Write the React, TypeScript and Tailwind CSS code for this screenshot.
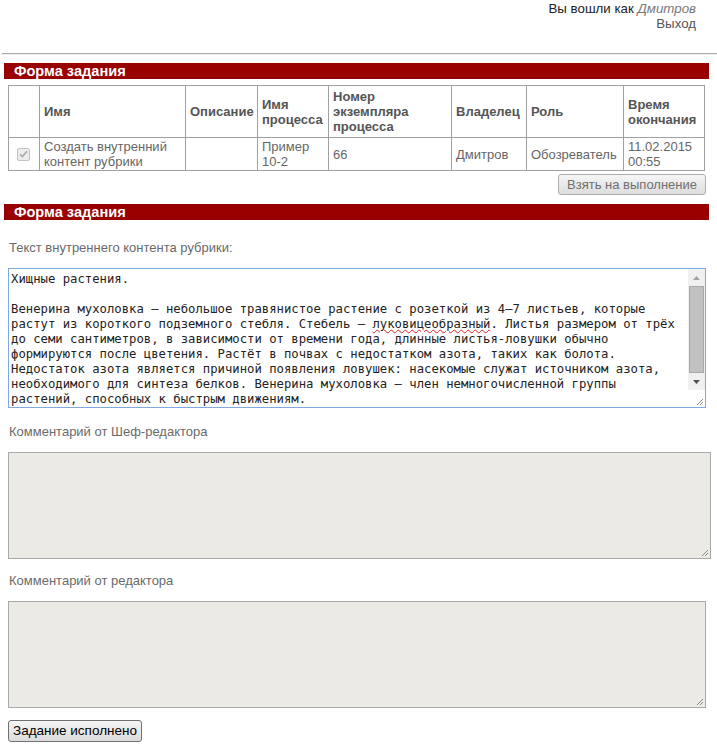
import React from "react";

const Grip = () => (
  <svg width="10" height="10" viewBox="0 0 10 10" className="block">
    <line x1="9" y1="3" x2="3" y2="9" stroke="#8a8a8a" strokeWidth="1" />
    <line x1="9" y1="6" x2="6" y2="9" stroke="#8a8a8a" strokeWidth="1" />
  </svg>
);

const Bar = () => (
  <div className="ml-[4px] mr-[8px] h-[16px] bg-[#990000] pl-[10px] text-[14.6px] font-bold leading-[16px] text-white">
    Форма задания
  </div>
);

const headers = [
  { w: 31, t: "" },
  { w: 146, t: "Имя" },
  { w: 72, t: "Описание" },
  { w: 71, t: "Имя процесса" },
  { w: 123, t: "Номер экземпляра процесса" },
  { w: 75, t: "Владелец" },
  { w: 97, t: "Роль" },
  { w: 81, t: "Время окончания" },
];

export default function App() {
  const mono = { fontFamily: '"DejaVu Sans Mono", "Liberation Mono", monospace' };
  return (
    <div
      className="relative h-[754px] w-[717px] overflow-hidden bg-white text-[13px] text-[#666]"
      style={{ fontFamily: '"Liberation Sans", Arial, sans-serif' }}
    >
      <div className="pr-[21px] pt-[1px] text-right text-[13.3px] leading-[15px]">
        <div className="text-[#222]">
          Вы вошли как <i className="text-[#777]">Дмитров</i>
        </div>
        <div className="text-[#555]">Выход</div>
      </div>

      <div className="ml-[2px] mt-[22px] h-px bg-[#a8a8a8]" />
      <div className="h-px bg-[#f0f0f0]" />

      <div className="mt-[8px]">
        <Bar />
      </div>

      <table className="ml-[8px] mt-[6px] w-[696px] table-fixed border-collapse">
        <colgroup>
          {headers.map((h, i) => (
            <col key={i} style={{ width: h.w }} />
          ))}
        </colgroup>
        <thead>
          <tr className="h-[52px]">
            {headers.map((h, i) => (
              <th
                key={i}
                className="border border-[#a0a0a0] px-[4px] text-left align-middle text-[13px] font-bold leading-[15px] text-[#555]"
              >
                {h.t}
              </th>
            ))}
          </tr>
        </thead>
        <tbody>
          <tr className="h-[33px] leading-[15px]">
            <td className="border border-[#a0a0a0] align-middle">
              <div className="ml-[8px] flex h-[13px] w-[13px] items-center justify-center rounded-[2px] border border-[#c4c4c4] bg-[#ececec]">
                <svg width="9" height="8" viewBox="0 0 9 8">
                  <path d="M1 4.2 L3.4 6.6 L8 1.2" fill="none" stroke="#a8a8a8" strokeWidth="1.6" />
                </svg>
              </div>
            </td>
            <td className="border border-[#a0a0a0] px-[4px] align-middle">Создать внутренний контент рубрики</td>
            <td className="border border-[#a0a0a0] px-[4px]"></td>
            <td className="border border-[#a0a0a0] px-[4px] align-middle">Пример 10-2</td>
            <td className="border border-[#a0a0a0] px-[4px] align-middle">66</td>
            <td className="border border-[#a0a0a0] px-[4px] align-middle">Дмитров</td>
            <td className="border border-[#a0a0a0] px-[4px] align-middle">Обозреватель</td>
            <td className="border border-[#a0a0a0] px-[4px] align-middle">11.02.2015 00:55</td>
          </tr>
        </tbody>
      </table>

      <div className="mt-[3px] flex justify-end pr-[11px]">
        <button className="h-[21px] rounded-[3px] border border-[#adadad] bg-gradient-to-b from-[#f6f6f6] to-[#dddddd] px-[8px] text-[13px] leading-[19px] text-[#707070]">
          Взять на выполнение
        </button>
      </div>

      <div className="mt-[9px]">
        <Bar />
      </div>

      <div className="ml-[9px] mt-[20px] leading-[15px] text-[#6a6a6a]">Текст внутреннего контента рубрики:</div>

      <div className="ml-[8px] mr-[11px] mt-[13px] flex h-[140px] border border-[#7eaadf] bg-white">
        <div className="flex-1 overflow-hidden pl-[2px] pt-[3px] text-[12.25px] leading-[15px] text-[#222]" style={mono}>
          <div className="whitespace-pre">Хищные растения.</div>
          <div className="h-[15px]" />
          <div className="whitespace-pre">Венерина мухоловка — небольшое травянистое растение с розеткой из 4–7 листьев, которые</div>
          <div className="whitespace-pre">
            растут из короткого подземного стебля. Стебель —{" "}
            <span className="underline decoration-[#e02020] decoration-wavy decoration-1 underline-offset-[1px]">луковицеобразный</span>. Листья размером от трёх
          </div>
          <div className="whitespace-pre">до семи сантиметров, в зависимости от времени года, длинные листья-ловушки обычно</div>
          <div className="whitespace-pre">формируются после цветения. Растёт в почвах с недостатком азота, таких как болота.</div>
          <div className="whitespace-pre">Недостаток азота является причиной появления ловушек: насекомые служат источником азота,</div>
          <div className="whitespace-pre">необходимого для синтеза белков. Венерина мухоловка — член немногочисленной группы</div>
          <div className="whitespace-pre">растений, способных к быстрым движениям.</div>
        </div>
        <div className="flex w-[17px] flex-col">
          <div className="flex flex-1 flex-col bg-[#f0f0f0]">
            <div className="flex h-[17px] items-center justify-center">
              <svg width="7" height="4" viewBox="0 0 7 4">
                <path d="M0 4 L3.5 0 L7 4 Z" fill="#a3a3a3" />
              </svg>
            </div>
            <div className="mx-[1px] flex-1 border border-[#a8a8a8] bg-[#c1c1c1]" />
            <div className="flex h-[17px] items-center justify-center">
              <svg width="7" height="4" viewBox="0 0 7 4">
                <path d="M0 0 L7 0 L3.5 4 Z" fill="#505050" />
              </svg>
            </div>
          </div>
          <div className="flex h-[17px] items-end justify-end bg-white pb-[1px] pr-[1px]">
            <Grip />
          </div>
        </div>
      </div>

      <div className="ml-[9px] mt-[16px] leading-[15px] text-[#6a6a6a]">Комментарий от Шеф-редактора</div>

      <div className="ml-[8px] mr-[6px] mt-[13px] flex h-[107px] items-end justify-end border border-[#a9a9a9] bg-[#ebeae4] pb-[1px] pr-[1px]">
        <Grip />
      </div>

      <div className="ml-[9px] mt-[14px] leading-[15px] text-[#6a6a6a]">Комментарий от редактора</div>

      <div className="ml-[8px] mr-[11px] mt-[13px] flex h-[107px] items-end justify-end border border-[#a9a9a9] bg-[#ebeae4] pb-[1px] pr-[1px]">
        <Grip />
      </div>

      <div className="ml-[8px] mt-[12px]">
        <button className="h-[22px] w-[134px] rounded-[3px] border border-[#707070] bg-gradient-to-b from-[#f4f4f4] to-[#dcdcdc] text-[13.5px] leading-[20px] text-black">
          Задание исполнено
        </button>
      </div>
    </div>
  );
}
